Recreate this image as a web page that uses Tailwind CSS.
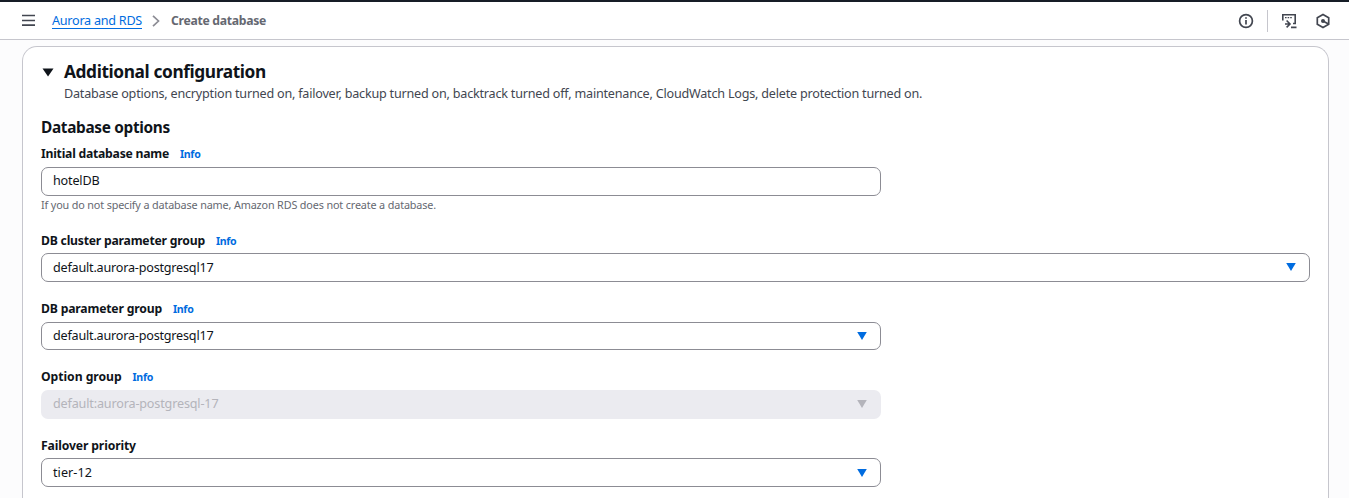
<!DOCTYPE html>
<html lang="en">
<head>
<meta charset="utf-8">
<title>Create database</title>
<script src="https://cdn.jsdelivr.net/npm/@tailwindcss/browser@4"></script>
</head>
<body class="flex h-screen flex-col overflow-hidden bg-[#fcfcfd] font-['Noto_Sans',sans-serif] text-[12.6px] leading-[18px] text-[#0f141a]">
  <header class="flex h-10 shrink-0 items-center border-t-2 border-b border-t-[#161d26] border-b-[#c6c6cd] bg-white pl-[22px] pr-[18px] text-[#424650]">
    <svg class="h-3 w-[13px] -translate-y-px" viewBox="0 0 13 12" fill="none" stroke="currentColor" stroke-width="1.7"><path d="M0 1.500h13M0 6.500h13M0 11.200h13"/></svg>
    <nav class="ml-[17px] flex items-center">
      <a class="h-[17px] whitespace-nowrap border-b border-b-[#006ce0] leading-[17px] tracking-[-0.25px] text-[#006ce0]">Aurora and RDS</a>
      <svg class="ml-2.5 h-3 w-2" viewBox="0 0 8 12" fill="none" stroke="#8c8c94" stroke-width="1.7"><path d="M1 .8 6.5 6 1 11.2"/></svg>
      <span class="ml-[11px] whitespace-nowrap text-[12.2px] font-bold tracking-[-0.29px] text-[#656871]">Create database</span>
    </nav>
    <div class="ml-auto flex items-center">
      <svg class="size-4" viewBox="0 0 16 16" fill="none" stroke="currentColor" stroke-width="1.7"><circle cx="8" cy="8" r="6.4"/><path d="M8 7v4.5M8 4.2v1.6"/></svg>
      <span class="ml-[13px] h-[22px] w-px bg-[#c6c6cd]"></span>
      <svg class="ml-[13px] size-4" viewBox="0 0 16 16" fill="none" stroke="currentColor" stroke-width="1.600"><path d="M1.800 7.500V1.800h12.400v8.700h-2.200"/><path stroke-width="1.200" stroke-dasharray="1.600 1" d="M4 4.600h7.200"/><path d="M4 11h4.500M5.600 7.500 9 11l-3.400 3.400M10 14.400h5.500"/></svg>
      <svg class="ml-[18px] size-4" viewBox="0 0 16 16" fill="none" stroke="currentColor" stroke-width="1.700"><path d="M8 1.500 13.700 4.700v6.600L8 14.500 2.300 11.300V4.700Z"/><circle cx="8" cy="8" r="2" fill="currentColor" stroke="none"/><path d="m8 8 5.500 3"/></svg>
    </div>
  </header>

  <main class="mx-[22px] mr-5 mt-1.5 grow rounded-t-[15px] border border-b-0 border-[#c6c6cd] bg-white px-[18px]">
    <div class="flex items-start pt-[15px]">
      <svg class="mt-[5.500px] ml-[1px] h-[9px] w-[12px]" viewBox="0 0 12 9" fill="currentColor"><path d="M.5.5h11L6 8.500Z"/></svg>
      <div class="ml-2.5">
        <h2 class="h-5 whitespace-nowrap text-[17.3px] leading-5 font-bold tracking-[-0.385px]">Additional configuration</h2>
        <p class="mt-[3px] whitespace-nowrap tracking-[-0.21px] text-[#424650]">Database options, encryption turned on, failover, backup turned on, backtrack turned off, maintenance, CloudWatch Logs, delete protection turned on.</p>
      </div>
    </div>

    <h3 class="mt-[15px] h-5 whitespace-nowrap text-[15.4px] leading-5 font-bold tracking-[-0.33px]">Database options</h3>

    <section class="mt-[7px] h-[87px]">
      <div class="flex h-[22px] items-start whitespace-nowrap"><label class="text-[12.2px] font-bold tracking-[-0.235px]">Initial database name</label><a class="ml-[11px] text-[10.6px] font-bold tracking-[-0.3px] text-[#006ce0]">Info</a></div>
      <div class="flex h-[29px] w-[840px] items-center rounded-[7px] border border-[#8c8c94] px-[11px]"><span class="-translate-y-px tracking-[-0.17px]">hotelDB</span></div>
      <p class="mt-px whitespace-nowrap text-[10.8px] leading-4 tracking-[-0.14px] text-[#656871]">If you do not specify a database name, Amazon RDS does not create a database.</p>
    </section>

    <section class="h-[68px]">
      <div class="flex h-[21px] items-start whitespace-nowrap"><label class="text-[12.2px] font-bold tracking-[-0.21px]">DB cluster parameter group</label><a class="ml-[11px] text-[10.6px] font-bold tracking-[-0.3px] text-[#006ce0]">Info</a></div>
      <div class="flex h-[29px] items-center justify-between rounded-[7px] border border-[#8c8c94] pr-[13px] pl-[11px]"><span class="tracking-[-0.2px]">default.aurora-postgresql17</span><svg class="h-2 w-[10px] -translate-y-px" viewBox="0 0 10 8" fill="#006ce0"><path d="M.2 0h9.600L5 8Z"/></svg></div>
    </section>

    <section class="h-[68px]">
      <div class="flex h-[22px] items-start whitespace-nowrap"><label class="text-[12.2px] font-bold tracking-[-0.18px]">DB parameter group</label><a class="ml-[11px] text-[10.6px] font-bold tracking-[-0.3px] text-[#006ce0]">Info</a></div>
      <div class="flex h-7 w-[840px] items-center justify-between rounded-[7px] border border-[#8c8c94] pr-[13px] pl-[11px]"><span class="tracking-[-0.2px]">default.aurora-postgresql17</span><svg class="h-2 w-[10px]" viewBox="0 0 10 8" fill="#006ce0"><path d="M.2 0h9.600L5 8Z"/></svg></div>
    </section>

    <section class="h-[69px]">
      <div class="flex h-[22px] items-start whitespace-nowrap"><label class="text-[12.2px] font-bold tracking-[-0.05px]">Option group</label><a class="ml-[11px] text-[10.6px] font-bold tracking-[-0.3px] text-[#006ce0]">Info</a></div>
      <div class="flex h-[29px] w-[840px] items-center justify-between rounded-[7px] bg-[#ebebf0] pr-3.5 pl-3 text-[#b4b4bb]"><span class="-translate-y-px tracking-[-0.16px]">default:aurora-postgresql-17</span><svg class="h-2 w-[10px] -translate-y-px" viewBox="0 0 10 8" fill="currentColor"><path d="M.2 0h9.600L5 8Z"/></svg></div>
    </section>

    <section>
      <div class="flex h-[21px] items-start whitespace-nowrap"><label class="text-[12.2px] font-bold tracking-[-0.135px]">Failover priority</label></div>
      <div class="flex h-[29px] w-[840px] items-center justify-between rounded-[7px] border border-[#8c8c94] pr-[13px] pl-[11px]"><span class="tracking-[0.05px]">tier-12</span><svg class="h-2 w-[10px]" viewBox="0 0 10 8" fill="#006ce0"><path d="M.2 0h9.600L5 8Z"/></svg></div>
    </section>
  </main>
</body>
</html>
